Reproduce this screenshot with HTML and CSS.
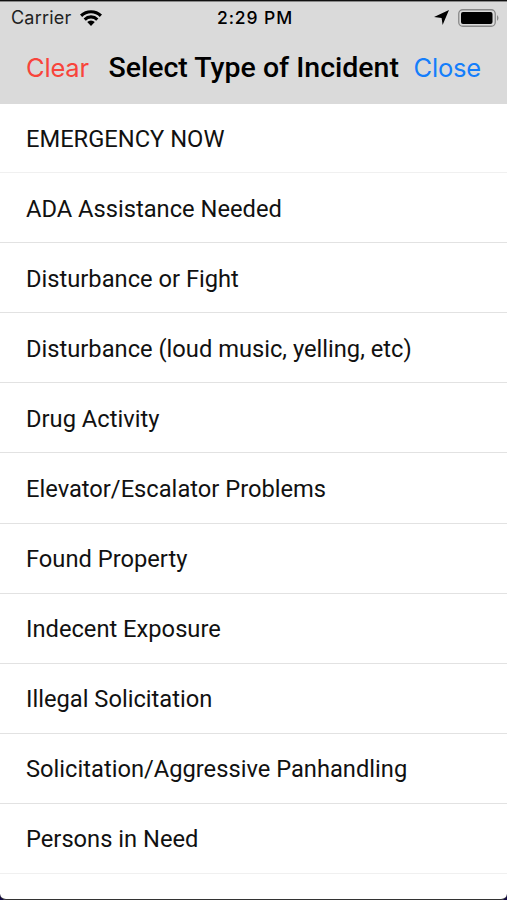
FILE: index.html
```html
<!DOCTYPE html>
<html lang="en">
<head>
<meta charset="utf-8">
<title>Select Type of Incident</title>
<link rel="stylesheet" href="styles.css">
</head>
<body>
<div class="screen">
<header class="top">
<div class="status">
<div class="carrier"><span>Carrier</span>
<svg class="wifi" viewBox="0 0 22 16"><path d="M0 4.6A16 16 0 0 1 22 4.6L19.8 6.9A12.5 12.5 0 0 0 2.2 6.9ZM3.6 8.4A10.5 10.5 0 0 1 18.4 8.4L16.2 10.7A7.4 7.4 0 0 0 5.8 10.7ZM7.2 12.1A5.4 5.4 0 0 1 14.8 12.1L11 16Z"/></svg></div>
<span class="time">2:29 PM</span>
<div class="indicators">
<svg class="location" viewBox="0 0 15 15"><path d="M15 0L8.6 15L7.6 7.9L0 7Z"/></svg>
<svg class="battery" viewBox="0 0 41 18"><rect x=".75" y=".75" width="36.5" height="16.5" rx="4" fill="none" stroke="#888" stroke-width="1.3"/><rect x="3" y="3" width="31.5" height="12" rx="2"/><path d="M39 6Q42 9 39 12Z" fill="#888"/></svg>
</div>
</div>
<nav class="bar"><a class="clear">Clear</a><h1>Select Type of Incident</h1><a class="close">Close</a></nav>
</header>
<ul class="list">
<li>EMERGENCY NOW</li>
<li>ADA Assistance Needed</li>
<li>Disturbance or Fight</li>
<li>Disturbance (loud music, yelling, etc)</li>
<li>Drug Activity</li>
<li>Elevator/Escalator Problems</li>
<li>Found Property</li>
<li>Indecent Exposure</li>
<li>Illegal Solicitation</li>
<li>Solicitation/Aggressive Panhandling</li>
<li>Persons in Need</li>
</ul>
</div>
</body>
</html>
```
FILE: styles.css
```css
* { box-sizing: border-box; }
body { margin: 0; background: #110843; font-family: Roboto, sans-serif; color: #000; }
.screen { height: 900px; overflow: hidden; background: #fff; border-top: 1px solid #111; border-bottom: 1px solid #333; border-radius: 0 0 6px 6px; }
.top { height: 103px; background: #dadada; border-top: 1px solid #888; }
.status { height: 31px; display: grid; grid-template-columns: 1fr auto 1fr; align-items: center; padding: 0 8px 0 11px; font-family: Inter, sans-serif; font-size: 18px; }
.carrier, .indicators { display: flex; align-items: center; gap: 9px; }
.carrier { letter-spacing: .2px; color: #222; }
.indicators { justify-content: flex-end; }
.time { font-weight: 500; font-size: 17.5px; letter-spacing: .9px; color: #000; }
.wifi { width: 22px; height: 16px; fill: #000; }
.location { width: 15px; height: 15px; }
.battery { width: 41px; height: 18px; }
.bar { height: 68px; display: flex; align-items: center; justify-content: space-between; padding: 0 26px; }
h1 { margin: 0 0 0 5px; font-size: 28.5px; font-weight: 500; white-space: nowrap; }
.clear, .close { font-family: Inter, sans-serif; font-size: 25.5px; letter-spacing: -.2px; }
.clear { color: #f8443b; }
.close { color: #147efb; }
.list { margin: -1px 0 0; padding: 0; list-style: none; }
.list li { height: 70.1px; display: flex; align-items: center; padding: 2px 0 0 26px; font-size: 23.7px; color: #111; border-bottom: 1px solid #e2e2e2; }
.list li:first-child, .list li:last-child { border-color: #f0f0f0; }
```
